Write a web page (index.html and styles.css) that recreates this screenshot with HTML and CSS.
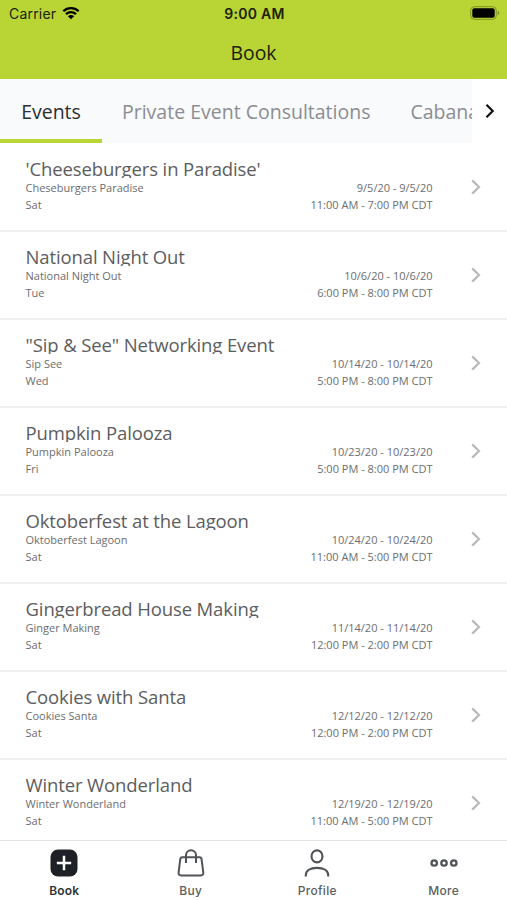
FILE: index.html
```html
<!DOCTYPE html>
<html lang="en">
<head>
    <meta charset="UTF-8">
    <meta name="viewport" content="width=device-width, initial-scale=1.0">
    <title>Book</title>
    <link rel="stylesheet" href="styles.css">
</head>
<body>
    <div class="app">
        <header class="header">
            <div class="status-bar">
                <div class="carrier">
                    <span>Carrier</span>
                    <svg class="wifi" viewBox="0 0 18 14" width="18" height="14">
                        <path d="M1.3 5.2a11 11 0 0 1 15.4 0M4 8.2a7.2 7.2 0 0 1 10 0" fill="none" stroke="#000" stroke-width="2.3"/>
                        <path d="M9 13.3L5.9 10.3a4.4 4.4 0 0 1 6.2 0z"/>
                    </svg>
                </div>
                <div class="clock">9:00 AM</div>
                <svg class="battery" viewBox="0 0 30 14" width="30" height="14">
                    <rect x="0.7" y="0.7" width="25.6" height="12.6" rx="3.6" fill="none" stroke="#7c9422" stroke-width="1"/>
                    <rect x="2.3" y="2.3" width="22.4" height="9.4" rx="2"/>
                    <path d="M27.7 4.8c2 .7 2 3.7 0 4.4z" fill="#7c9422"/>
                </svg>
            </div>
            <h1>Book</h1>
        </header>

        <nav class="tabs">
            <div class="tab-list">
                <a class="tab active">Events</a>
                <a class="tab">Private Event Consultations</a>
                <a class="tab">Cabanas</a>
            </div>
            <div class="tab-next">
                <svg viewBox="0 0 10 16" width="10" height="16"><path d="M1.5 1.8L7.7 8l-6.2 6.2" fill="none" stroke="#111" stroke-width="2.2"/></svg>
            </div>
        </nav>

        <main class="event-list" id="event-list"></main>

        <footer class="bottom-nav">
            <a class="nav-item active">
                <svg viewBox="0 0 28 28" width="28" height="28">
                    <rect x="0.5" y="0.5" width="27" height="27" rx="7.5" fill="#1d2125"/>
                    <path d="M14 6.8v14.4M6.8 14h14.4" stroke="#fff" stroke-width="2.5"/>
                </svg>
                <span>Book</span>
            </a>
            <a class="nav-item">
                <svg viewBox="0 0 28 28" width="28" height="28" fill="none" stroke="#505357" stroke-width="2">
                    <path d="M5.2 8.2h17.4q1.6 0 1.9 1.6l1.8 13.6q.3 3-2.6 3H4.2q-2.9 0-2.6-3L3.3 9.8q.3-1.6 1.9-1.6z"/>
                    <path d="M9 14V6.2a5 5 0 0 1 10 0V14"/>
                </svg>
                <span>Buy</span>
            </a>
            <a class="nav-item">
                <svg viewBox="0 0 28 28" width="28" height="28" fill="none" stroke="#505357" stroke-width="2.1">
                    <rect x="8.6" y="1.4" width="10.8" height="12" rx="5.4"/>
                    <path d="M2.8 27.6v-1.4C2.8 21.7 7 18.9 14 18.9s11.2 2.8 11.2 7.3v1.4"/>
                </svg>
                <span>Profile</span>
            </a>
            <a class="nav-item">
                <svg viewBox="0 0 28 28" width="28" height="28" fill="none" stroke="#505357" stroke-width="2.3">
                    <circle cx="4.2" cy="14" r="2.7"/>
                    <circle cx="14" cy="14" r="2.7"/>
                    <circle cx="23.8" cy="14" r="2.7"/>
                </svg>
                <span>More</span>
            </a>
        </footer>
    </div>

    <script>
        const events = [
            { title: "'Cheeseburgers in Paradise'", name: "Cheseburgers Paradise", day: "Sat", date: "9/5/20 - 9/5/20", time: "11:00 AM - 7:00 PM CDT" },
            { title: "National Night Out", name: "National Night Out", day: "Tue", date: "10/6/20 - 10/6/20", time: "6:00 PM - 8:00 PM CDT" },
            { title: "\"Sip & See\" Networking Event", name: "Sip See", day: "Wed", date: "10/14/20 - 10/14/20", time: "5:00 PM - 8:00 PM CDT" },
            { title: "Pumpkin Palooza", name: "Pumpkin Palooza", day: "Fri", date: "10/23/20 - 10/23/20", time: "5:00 PM - 8:00 PM CDT" },
            { title: "Oktoberfest at the Lagoon", name: "Oktoberfest Lagoon", day: "Sat", date: "10/24/20 - 10/24/20", time: "11:00 AM - 5:00 PM CDT" },
            { title: "Gingerbread House Making", name: "Ginger Making", day: "Sat", date: "11/14/20 - 11/14/20", time: "12:00 PM - 2:00 PM CDT" },
            { title: "Cookies with Santa", name: "Cookies Santa", day: "Sat", date: "12/12/20 - 12/12/20", time: "12:00 PM - 2:00 PM CDT" },
            { title: "Winter Wonderland", name: "Winter Wonderland", day: "Sat", date: "12/19/20 - 12/19/20", time: "11:00 AM - 5:00 PM CDT" }
        ];

        const eventList = document.getElementById('event-list');

        events.forEach(event => {
            const row = document.createElement('div');
            row.className = 'event';
            row.innerHTML = `
                <div class="event-info">
                    <h2></h2>
                    <div class="event-line"><span>${event.name}</span><span>${event.date}</span></div>
                    <div class="event-line"><span>${event.day}</span><span>${event.time}</span></div>
                </div>
                <svg class="arrow" viewBox="0 0 10 16" width="10" height="16"><path d="M1.2 1.4L8 8l-6.8 6.6" fill="none" stroke="#b9b9b9" stroke-width="2.2"/></svg>`;
            row.querySelector('h2').textContent = event.title;
            eventList.appendChild(row);
        });
    </script>
</body>
</html>
```
FILE: styles.css
```css
* {
    box-sizing: border-box;
}
body {
    font-family: "Open Sans", sans-serif;
    background-color: #fff;
    margin: 0;
    padding: 0;
}
.app {
    display: flex;
    flex-direction: column;
    height: 900px;
    overflow: hidden;
}
.header {
    background-color: #b9d535;
    height: 79px;
    flex-shrink: 0;
}
.status-bar {
    display: grid;
    grid-template-columns: 1fr auto 1fr;
    align-items: center;
    height: 27px;
    padding: 0 7px 0 9px;
    font-family: Inter, sans-serif;
    font-size: 14px;
    color: #1c2108;
}
.carrier {
    display: flex;
    align-items: center;
    gap: 6px;
    letter-spacing: 0.2px;
}
.wifi {
    margin-top: -2px;
}
.clock {
    font-weight: 600;
    letter-spacing: 0.3px;
}
.battery {
    justify-self: end;
    margin-top: -1px;
}
.header h1 {
    margin: 0;
    padding-top: 13px;
    font-size: 19.4px;
    font-weight: 400;
    line-height: 26px;
    text-align: center;
    color: #1c2108;
}
.tabs {
    display: flex;
    height: 64px;
    flex-shrink: 0;
    background-color: #f8fafc;
}
.tab-list {
    display: flex;
    flex: 1;
    overflow: hidden;
}
.tab {
    flex-shrink: 0;
    padding: 0 20px;
    font-size: 19.5px;
    line-height: 65px;
    color: #8b8d92;
    white-space: nowrap;
}
.tab.active {
    width: 102px;
    color: #2c2e31;
    padding: 0;
    text-align: center;
    border-bottom: 4px solid #b9d535;
}
.tab-next {
    display: flex;
    align-items: center;
    width: 35px;
    padding-left: 13px;
    background-color: #fff;
}
.event-list {
    flex: 1;
    min-height: 0;
    padding-top: 1px;
    overflow: hidden;
}
.event {
    display: flex;
    justify-content: space-between;
    height: 88px;
    padding: 16px 26px 0 25.5px;
    border-bottom: 2px solid #efefef;
}
.event-info {
    width: 407px;
}
.event h2 {
    margin: 0 0 1px;
    height: 18px;
    font-size: 18.5px;
    font-weight: 400;
    line-height: 18px;
    letter-spacing: -0.12px;
    color: #5c5d5f;
    overflow: hidden;
}
.event-line {
    display: flex;
    justify-content: space-between;
    font-size: 11px;
    line-height: 17px;
    color: #6c6d6f;
}
.arrow {
    margin-top: 19px;
}
.bottom-nav {
    display: flex;
    height: 60px;
    flex-shrink: 0;
    padding-left: 1px;
    border-top: 1px solid #e3e3e3;
    background-color: #fff;
}
.nav-item {
    display: flex;
    flex: 1;
    flex-direction: column;
    align-items: center;
    gap: 6px;
    padding-top: 8px;
    font-family: Inter, sans-serif;
    font-size: 12px;
    font-weight: 500;
    line-height: 15px;
    letter-spacing: 0.3px;
    color: #5c5f62;
}
.nav-item.active {
    font-weight: 600;
    letter-spacing: 0.1px;
    color: #303336;
}
```
